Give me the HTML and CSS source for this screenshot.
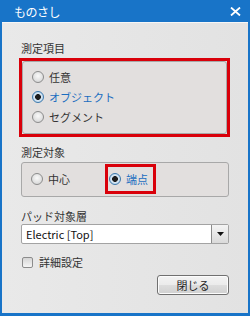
FILE: index.html
```html
<!DOCTYPE html>
<html lang="ja">
<head>
  <meta charset="UTF-8" />
  <title>ものさし</title>
  <link rel="stylesheet" href="styles.css">
</head>
<body>
  <div class="window">
    <div class="titlebar">
      <span class="title">ものさし</span>
      <svg class="close" width="11" height="9" viewBox="0 0 11 9">
        <path d="M1 0.5 L10 8.5 M10 0.5 L1 8.5" stroke="#fff" stroke-width="1.8" fill="none"/>
      </svg>
    </div>

    <div class="content">
      <div class="label first">測定項目</div>
      <div class="mark mark-wide">
        <div class="group group-list">
          <div class="radio-row"><span class="radio"></span>任意</div>
          <div class="radio-row selected"><span class="radio checked"></span>オブジェクト</div>
          <div class="radio-row"><span class="radio"></span>セグメント</div>
        </div>
      </div>

      <div class="label">測定対象</div>
      <div class="group group-inline">
        <div class="radio-row center-item"><span class="radio"></span>中心</div>
        <div class="mark mark-small">
          <div class="radio-row selected"><span class="radio checked"></span>端点</div>
        </div>
      </div>

      <div class="label pad-label">パッド対象層</div>
      <div class="select">
        <span class="select-text">Electric [Top]</span>
        <span class="select-btn">
          <svg width="7" height="4" viewBox="0 0 7 4"><path d="M0 0 L7 0 L3.5 4 Z" fill="#111"/></svg>
        </span>
      </div>

      <div class="check-row"><span class="checkbox"></span>詳細設定</div>

      <div class="footer">
        <button class="btn">閉じる</button>
      </div>
    </div>
  </div>
</body>
</html>
```

FILE: styles.css
```css
* {
  box-sizing: border-box;
}

body {
  margin: 0;
  font-family: "Noto Sans CJK JP", "Noto Sans", sans-serif;
  font-size: 11px;
  color: #333;
}

.window {
  width: 250px;
  height: 316px;
  background: #1874c8;
  padding: 0 2px 3px;
  display: flex;
  flex-direction: column;
}

.titlebar {
  height: 22px;
  display: flex;
  align-items: center;
  justify-content: space-between;
  padding: 0 7px 0 12px;
  color: #fff;
}

.title {
  font-size: 12px;
  letter-spacing: -0.5px;
}

.close {
  display: block;
}

.content {
  flex: 1;
  background: linear-gradient(90deg, #e9e9e9, #e2e2e2);
  border-top: 1px solid #f6f6f6;
  padding: 0 19px 0 17px;
}

.label {
  height: 14px;
  line-height: 14px;
  margin: 8px 0 3px 2px;
}

.label.first {
  margin-top: 18px;
  margin-bottom: 3px;
}

.pad-label {
  margin-top: 12px;
  margin-bottom: 1px;
}

.mark {
  border: 3px solid #d9000a;
}

.mark-wide {
  width: 211px;
}

.group {
  border: 1px solid #a8a8a8;
  border-radius: 3px;
  background: #e2dfde;
}

.group-list {
  padding: 5px 0 6px 9px;
}

.group-inline {
  margin-left: 2px;
  width: 208px;
  height: 35px;
  padding: 1px 0 0 9px;
  display: flex;
  align-items: flex-start;
}

.radio-row {
  height: 20px;
  display: flex;
  align-items: center;
  gap: 5px;
}

.radio-row.selected {
  color: #1a6dc0;
}

.center-item {
  height: 30px;
  width: 74px;
}

.mark-small {
  height: 30px;
  padding: 0 5px 0 1px;
  display: flex;
  align-items: center;
}

.radio {
  width: 12px;
  height: 12px;
  border-radius: 50%;
  border: 1px solid #8c8c8c;
  background: radial-gradient(circle at 50% 40%, #fafafa 0%, #e0e0e0 60%, #cdcdcd 100%);
}

.radio.checked {
  border-color: #3c79ad;
  background: radial-gradient(circle, #1e1e1e 0 2.6px, #d8e8f5 3.2px, #a9c8e2 100%);
}

.select {
  margin-left: 2px;
  width: 208px;
  height: 20px;
  background: #fff;
  border: 1px solid #a3a3a3;
  border-radius: 2px;
  display: flex;
  align-items: center;
}

.select-text {
  flex: 1;
  padding-left: 4px;
  color: #111;
}

.select-btn {
  width: 17px;
  height: 100%;
  border-left: 1px solid #8c8c8c;
  background: linear-gradient(#f4f4f4, #dadada);
  display: flex;
  align-items: center;
  justify-content: center;
}

.check-row {
  margin: 11px 0 0 3px;
  height: 14px;
  display: flex;
  align-items: center;
  gap: 6px;
}

.checkbox {
  width: 11px;
  height: 11px;
  border: 1px solid #8c8c8c;
  border-radius: 2px;
  background: linear-gradient(#d6d6d6, #f5f5f5);
}

.footer {
  display: flex;
  justify-content: flex-end;
  margin-top: 6px;
}

.btn {
  width: 72px;
  height: 20px;
  padding: 0;
  font-family: inherit;
  font-size: 11px;
  color: #222;
  border: 1px solid #707070;
  border-radius: 3px;
  background: linear-gradient(#f3f3f3 0%, #ebebeb 50%, #dddddd 51%, #d0d0d0 100%);
  box-shadow: inset 0 0 0 1px #fcfcfc;
}
```
